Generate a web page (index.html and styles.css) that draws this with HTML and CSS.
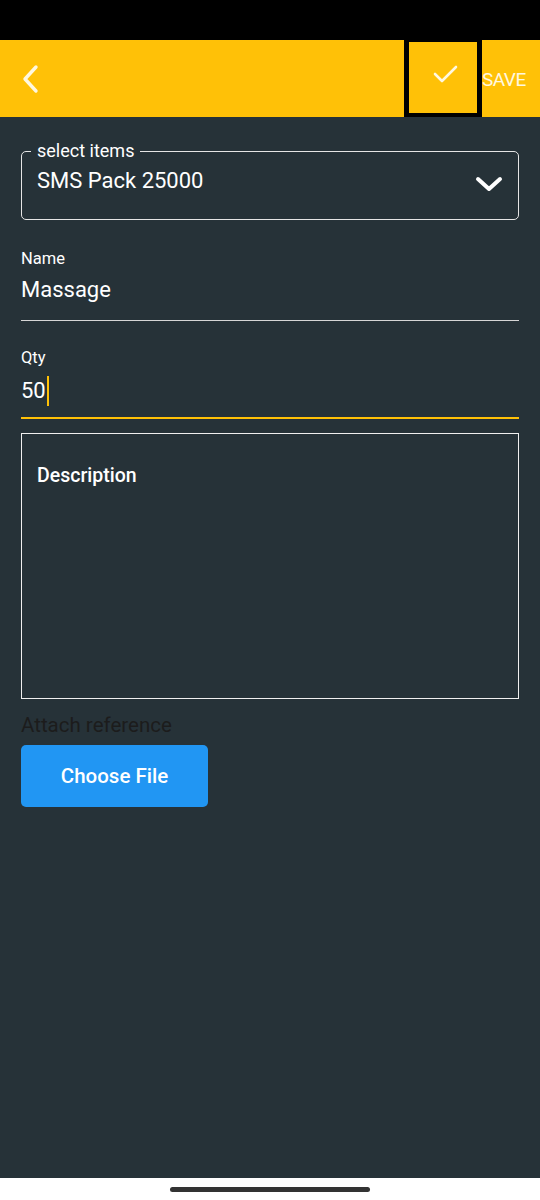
FILE: index.html
```html
<!DOCTYPE html>
<html>
<head>
<meta charset="utf-8">
<link rel="stylesheet" href="styles.css">
</head>
<body>
<div class="screen">
  <div class="statusbar"></div>
  <header class="appbar">
    <button class="back" aria-label="back">
      <svg width="20" height="30" viewBox="0 0 20 30"><path d="M16 3 L5 15 L16 27" fill="none" stroke="#fff8e1" stroke-width="3.4" stroke-linecap="round" stroke-linejoin="round"/></svg>
    </button>
    <div class="spacer"></div>
    <button class="checkbtn" aria-label="confirm">
      <svg width="30" height="24" viewBox="0 0 30 24"><path d="M4 12 L11 19 L25 5" fill="none" stroke="#fff8e1" stroke-width="2.6" stroke-linecap="round" stroke-linejoin="round"/></svg>
    </button>
    <div class="save">SAVE</div>
  </header>
  <main class="form">
    <fieldset class="select">
      <legend>select items</legend>
      <div class="select-row">
        <span class="select-value">SMS Pack 25000</span>
        <svg class="chev" width="30" height="20" viewBox="0 0 30 20"><path d="M4 5 L15 15 L26 5" fill="none" stroke="#fff" stroke-width="4" stroke-linecap="round" stroke-linejoin="round"/></svg>
      </div>
    </fieldset>
    <div class="field">
      <div class="label">Name</div>
      <div class="value">Massage</div>
    </div>
    <div class="field focused">
      <div class="label">Qty</div>
      <div class="value">50<span class="caret"></span></div>
    </div>
    <div class="desc">
      <div class="desc-label">Description</div>
    </div>
    <div class="attach">Attach reference</div>
    <button class="choose">Choose File</button>
  </main>
  <div class="navbar"><div class="handle"></div></div>
</div>
</body>
</html>
```
FILE: styles.css
```css
* { box-sizing: border-box; }
html, body { margin: 0; padding: 0; }
body { font-family: Roboto, "Noto Sans", sans-serif; background: #fff; }
.screen { width: 540px; height: 1200px; display: flex; flex-direction: column; background: #263238; }
.statusbar { height: 40px; background: #000; flex: none; }
.appbar { height: 77px; background: #FFC107; display: flex; align-items: stretch; flex: none; }
.back { width: 62px; border: 0; background: transparent; padding: 0 0 0 20px; display: flex; align-items: center; }
.spacer { flex: 1; }
.checkbtn { width: 78px; background: #FFC107; border: solid #000; border-width: 2px 5px 4px 5px; display: flex; align-items: center; justify-content: center; padding: 0 0 8px 6px; }
.save { width: 58px; color: #fff8e1; font-size: 19px; display: flex; align-items: center; letter-spacing: -0.5px; padding-top: 2px; }
.form { flex: 1; padding: 0 21px; display: flex; flex-direction: column; }
.select { margin: 24px 0 0 0; border: 1.5px solid #e6e6e6; border-radius: 5px; height: 79px; padding: 0 16px 0 15px; min-inline-size: 0; }
.select legend { color: #fff; font-size: 18px; padding: 0 6px; margin-left: -6px; line-height: 20px; }
.select-row { display: flex; align-items: center; justify-content: space-between; height: 44px; margin-top: -2px; }
.select-value { color: #fff; font-size: 22px; line-height: 26px; }
.chev { margin-top: 6px; margin-right: -2px; }
.field { margin-top: 29px; border-bottom: 1.5px solid #d6d6d6; height: 71.5px; }
.field + .field { margin-top: 27.5px; }
.field.focused { border-bottom: 2.5px solid #FFC107; height: 71px; }
.label { color: #fff; font-size: 16.5px; line-height: 20px; }
.value { color: #fff; font-size: 22px; line-height: 26px; margin-top: 8px; display: flex; align-items: center; }
.caret { display: inline-block; width: 2px; height: 30px; background: #FFC107; margin-left: 1px; }
.desc { margin-top: 14px; height: 266px; border: 1.5px solid #f0f0f0; padding: 31px 15px 0 15px; }
.desc-label { color: #fff; font-size: 19.5px; font-weight: 500; line-height: 22px; }
.attach { color: #1c1c1c; font-size: 20.5px; margin-top: 14px; line-height: 24px; }
.choose { margin-top: 8px; width: 187px; height: 62px; background: #2196F3; border: 0; border-radius: 5px; color: #fff; font-family: Roboto, sans-serif; font-size: 20.5px; font-weight: 500; }
.navbar { height: 22px; background: #fff; flex: none; display: flex; justify-content: center; padding-top: 9px; }
.handle { width: 200px; height: 5px; background: #333; border-radius: 3px; }
```
